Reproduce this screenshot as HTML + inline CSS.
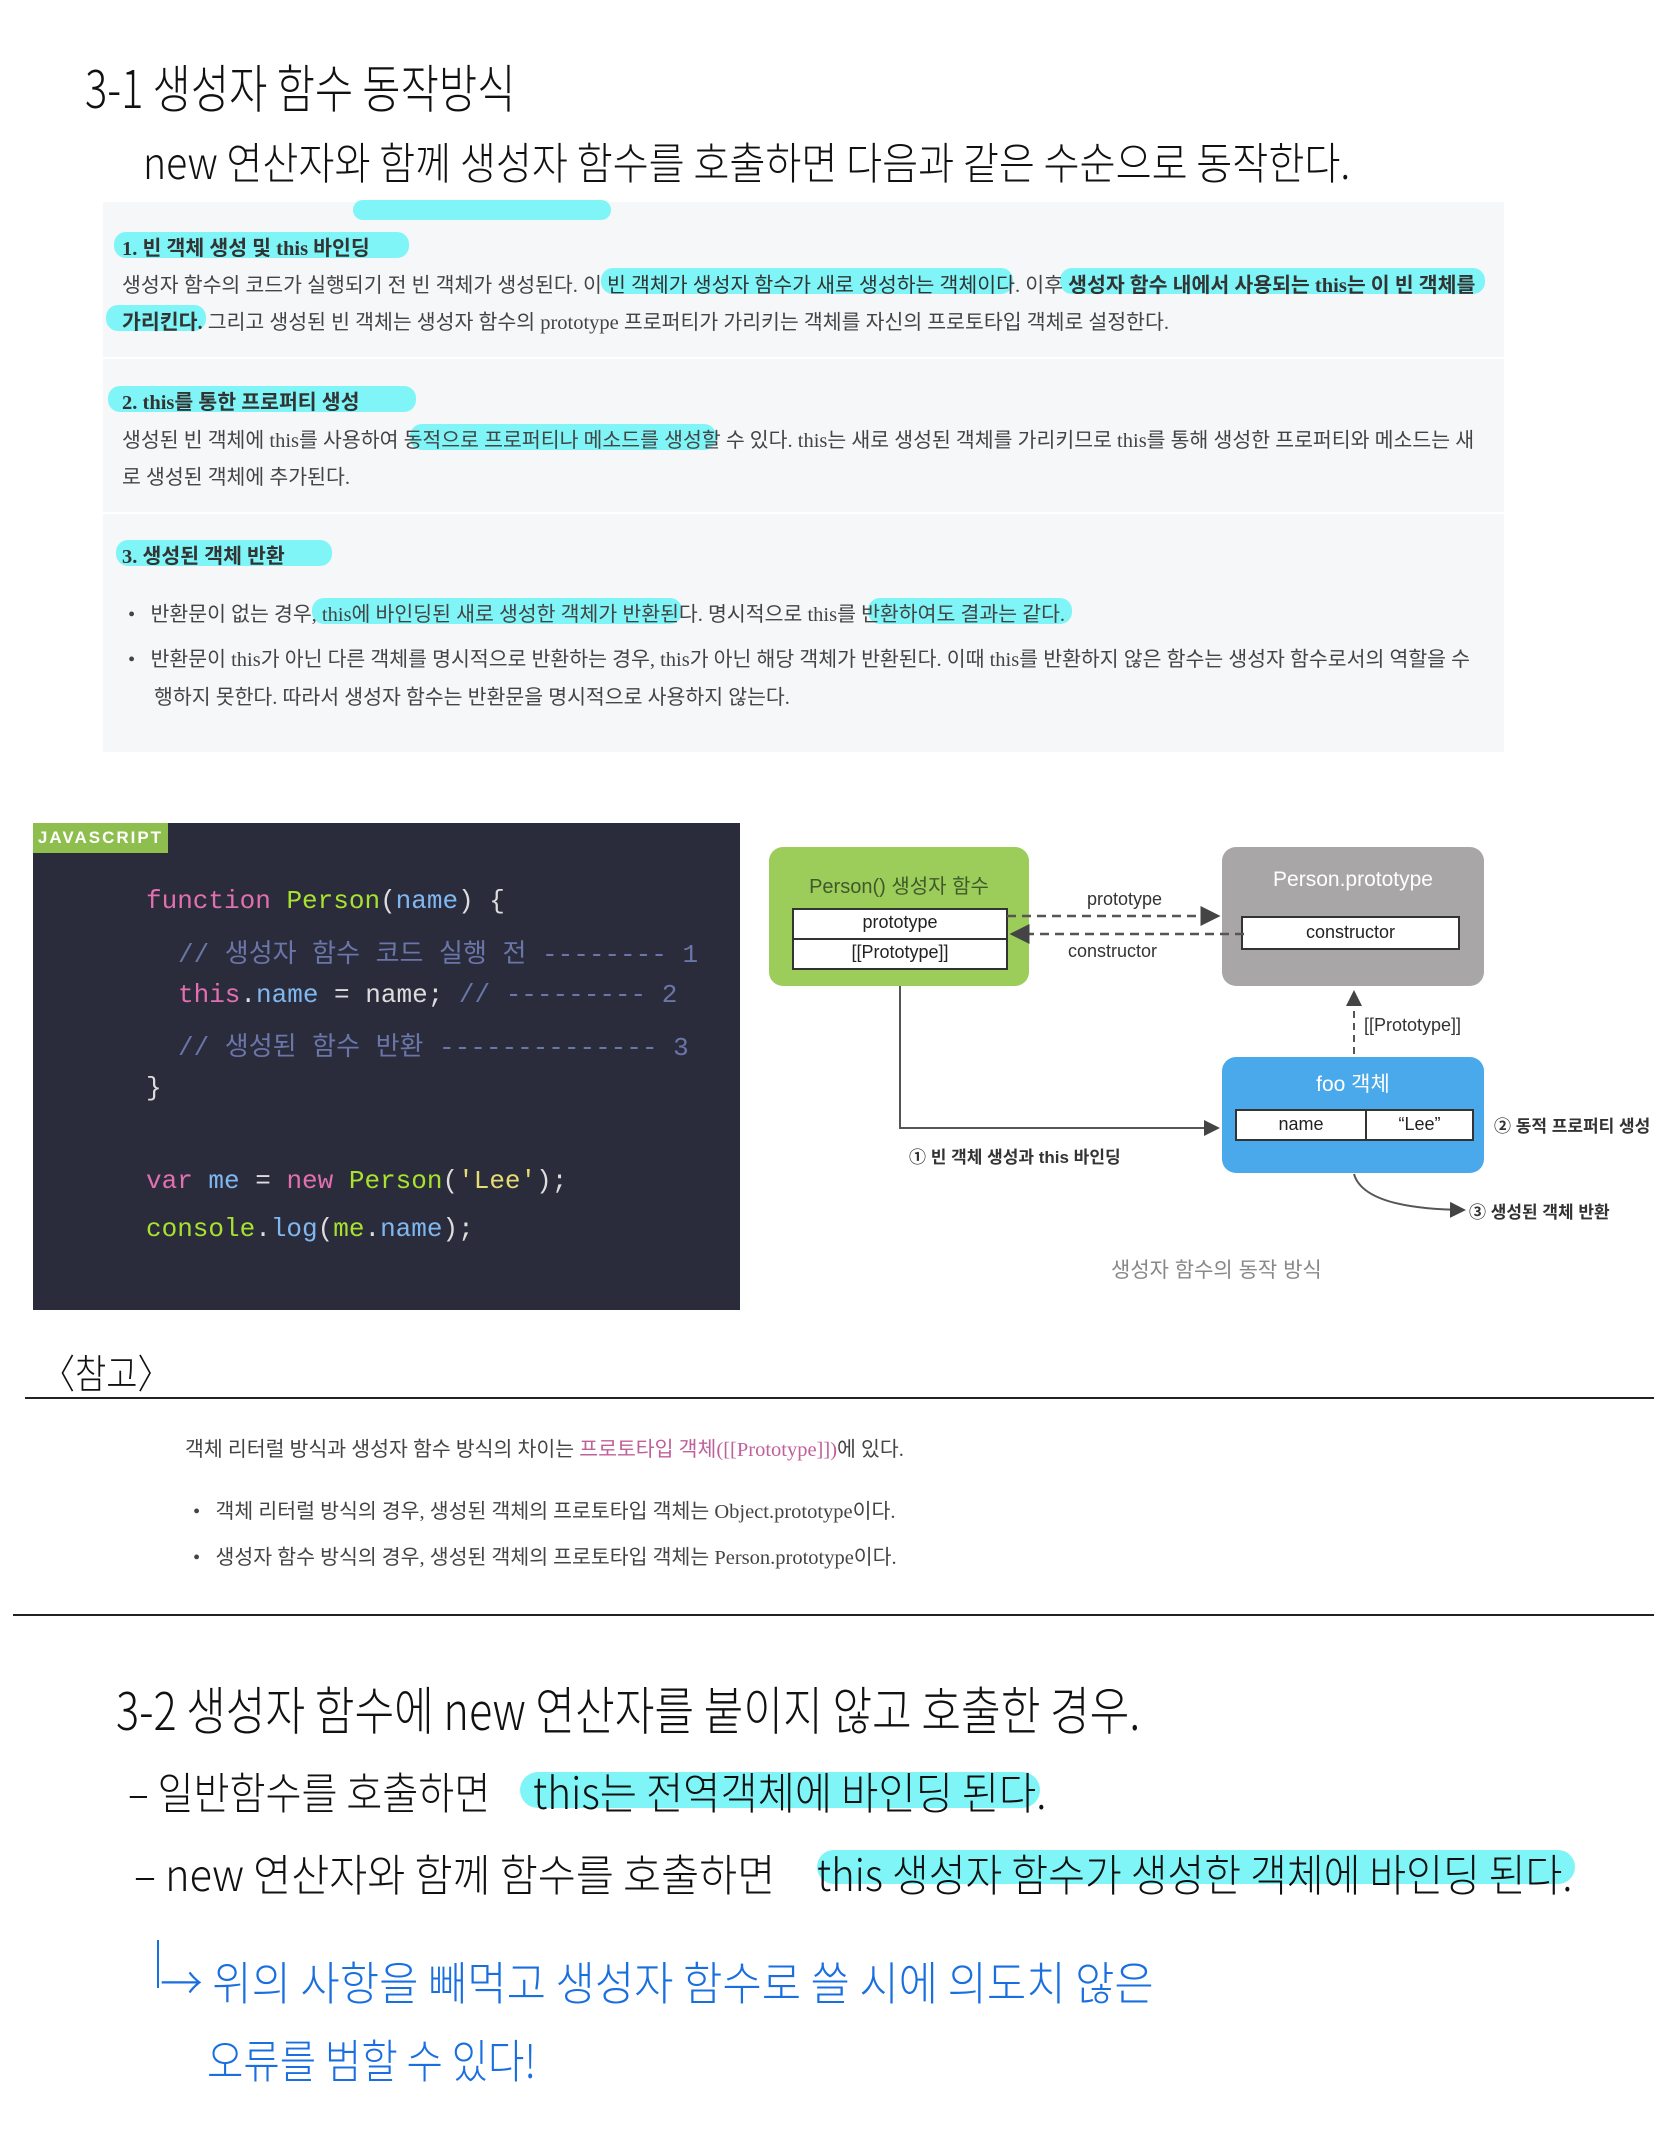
<!DOCTYPE html>
<html><head><meta charset="utf-8"><style>
body{margin:0;width:1668px;height:2154px;background:#fff;position:relative;overflow:hidden;font-family:"Liberation Sans","Noto Sans CJK KR",sans-serif}
.a{position:absolute;white-space:nowrap}
.hw{font-family:"Noto Sans CJK KR",sans-serif;font-weight:300;color:#111;transform-origin:left top}
.hl{position:absolute;background:#7ff5f7;border-radius:12px}
.tx{font-family:"Liberation Serif","Noto Sans CJK KR",serif;color:#444;font-size:20.5px}
.b{font-weight:bold;color:#333}
.code{font-family:"Liberation Mono",monospace;font-size:26px;color:#ddd}
.dg{font-family:"Liberation Sans","Noto Sans CJK KR",sans-serif}
</style></head><body>
<div class="a hw" style="left:85px;top:48px;font-size:52px;transform:scaleX(.8)">3-1 생성자 함수 동작방식</div>
<div class="a hw" style="left:143px;top:128px;font-size:44px;transform:scaleX(.89)">new 연산자와 함께 생성자 함수를 호출하면 다음과 같은 수순으로 동작한다.</div>
<div class="hl" style="left:353px;top:200px;width:258px;height:20px"></div>

<div class="a" style="left:103px;top:202px;width:1401px;height:550px;background:#f6f7f9"></div>
<div class="a" style="left:103px;top:357px;width:1401px;height:2px;background:#fff"></div>
<div class="a" style="left:103px;top:512px;width:1401px;height:2px;background:#fff"></div>
<div class="hl" style="left:353px;top:200px;width:258px;height:20px"></div>

<div class="hl" style="left:114px;top:232px;width:295px;height:26px"></div>
<div class="a tx b" style="left:122px;top:231px">1. 빈 객체 생성 및 this 바인딩</div>
<div class="hl" style="left:601px;top:268px;width:412px;height:26px"></div>
<div class="hl" style="left:1060px;top:268px;width:425px;height:26px"></div>
<div class="hl" style="left:106px;top:305px;width:100px;height:26px"></div>
<div class="a tx" style="left:122px;top:268px">생성자 함수의 코드가 실행되기 전 빈 객체가 생성된다. 이 <span style="color:#333">빈 객체가 생성자 함수가 새로 생성하는 객체이다</span>. 이후 <b class="b">생성자 함수 내에서 사용되는 this는 이 빈 객체를</b></div>
<div class="a tx" style="left:122px;top:305px"><b class="b">가리킨다.</b> 그리고 생성된 빈 객체는 생성자 함수의 prototype 프로퍼티가 가리키는 객체를 자신의 프로토타입 객체로 설정한다.</div>

<div class="hl" style="left:108px;top:386px;width:308px;height:26px"></div>
<div class="a tx b" style="left:122px;top:385px">2. this를 통한 프로퍼티 생성</div>
<div class="hl" style="left:410px;top:424px;width:306px;height:26px"></div>
<div class="a tx" style="left:122px;top:423px">생성된 빈 객체에 this를 사용하여 동적으로 프로퍼티나 메소드를 생성할 수 있다. this는 새로 생성된 객체를 가리키므로 this를 통해 생성한 프로퍼티와 메소드는 새</div>
<div class="a tx" style="left:122px;top:460px">로 생성된 객체에 추가된다.</div>

<div class="hl" style="left:116px;top:540px;width:216px;height:26px"></div>
<div class="a tx b" style="left:122px;top:539px">3. 생성된 객체 반환</div>
<div class="hl" style="left:312px;top:598px;width:370px;height:26px"></div>
<div class="hl" style="left:868px;top:598px;width:204px;height:26px"></div>
<div class="a tx" style="left:128px;top:597px">•&nbsp;&nbsp; 반환문이 없는 경우, this에 바인딩된 새로 생성한 객체가 반환된다. 명시적으로 this를 반환하여도 결과는 같다.</div>
<div class="a tx" style="left:128px;top:642px">•&nbsp;&nbsp; 반환문이 this가 아닌 다른 객체를 명시적으로 반환하는 경우, this가 아닌 해당 객체가 반환된다. 이때 this를 반환하지 않은 함수는 생성자 함수로서의 역할을 수</div>
<div class="a tx" style="left:154px;top:680px">행하지 못한다. 따라서 생성자 함수는 반환문을 명시적으로 사용하지 않는다.</div>

<div class="a" style="left:33px;top:823px;width:707px;height:487px;background:#2b2c3b"></div>
<div class="a" style="left:33px;top:823px;width:135px;height:30px;background:#8ebf4e;color:#fff;font:bold 17px 'Liberation Sans';letter-spacing:2px;line-height:30px;text-align:center">JAVASCRIPT</div>
<div class="a code" style="left:146px;top:886px"><span style="color:#e26fb0">function</span> <span style="color:#a6e22e">Person</span>(<span style="color:#7fb8f0">name</span>) {</div>
<div class="a code" style="left:178px;top:933px;color:#6a75a8">// 생성자 함수 코드 실행 전 -------- 1</div>
<div class="a code" style="left:178px;top:980px"><span style="color:#e26fb0">this</span>.<span style="color:#7fb8f0">name</span> = name;  <span style="color:#6a75a8">// --------- 2</span></div>
<div class="a code" style="left:178px;top:1026px;color:#6a75a8">// 생성된 함수 반환 -------------- 3</div>
<div class="a code" style="left:146px;top:1073px">}</div>
<div class="a code" style="left:146px;top:1166px"><span style="color:#e26fb0">var</span> <span style="color:#7fb8f0">me</span> = <span style="color:#e26fb0">new</span> <span style="color:#a6e22e">Person</span>(<span style="color:#e6db74">'Lee'</span>);</div>
<div class="a code" style="left:146px;top:1214px"><span style="color:#a6e22e">console</span>.<span style="color:#7fb8f0">log</span>(<span style="color:#a6e22e">me</span>.<span style="color:#7fb8f0">name</span>);</div>

<svg class="a" style="left:4px;top:4px" width="1668" height="1320">
<defs><marker id="ar" markerWidth="8" markerHeight="8" refX="7" refY="4" orient="auto"><path d="M0,0L8,4L0,8z" fill="#444"/></marker></defs>
<rect x="765" y="843" width="260" height="139" rx="14" fill="#9ccc5a"/>
<rect x="789" y="905" width="214" height="60" fill="#fff" stroke="#333" stroke-width="2"/>
<line x1="789" y1="935" x2="1003" y2="935" stroke="#333" stroke-width="2"/>
<rect x="1218" y="843" width="262" height="139" rx="14" fill="#a9a6a7"/>
<rect x="1238" y="913" width="217" height="32" fill="#fff" stroke="#333" stroke-width="2"/>
<rect x="1218" y="1053" width="262" height="116" rx="14" fill="#4aa9ea"/>
<rect x="1232" y="1106" width="237" height="30" fill="#fff" stroke="#333" stroke-width="2"/>
<line x1="1362" y1="1106" x2="1362" y2="1136" stroke="#333" stroke-width="2"/>
<line x1="1003" y1="912" x2="1214" y2="912" stroke="#555" stroke-width="2.5" stroke-dasharray="9,6" marker-end="url(#ar)"/>
<line x1="1240" y1="930" x2="1008" y2="930" stroke="#555" stroke-width="2.5" stroke-dasharray="9,6" marker-end="url(#ar)"/>
<line x1="1350" y1="1050" x2="1350" y2="988" stroke="#555" stroke-width="2" stroke-dasharray="7,5" marker-end="url(#ar)"/>
<polyline points="896,982 896,1124 1214,1124" fill="none" stroke="#555" stroke-width="2" marker-end="url(#ar)"/>
<path d="M1350,1170 Q1360,1205 1460,1206" fill="none" stroke="#555" stroke-width="2" marker-end="url(#ar)"/>
</svg>
<div style="position:absolute;left:4px;top:4px">
<div class="a dg" style="left:765px;top:866px;width:260px;text-align:center;font-size:20px;color:#3f5a2a">Person() 생성자 함수</div>
<div class="a dg" style="left:789px;top:908px;width:214px;text-align:center;font-size:18px;color:#222">prototype</div>
<div class="a dg" style="left:789px;top:938px;width:214px;text-align:center;font-size:18px;color:#222">[[Prototype]]</div>
<div class="a dg" style="left:1218px;top:864px;width:262px;text-align:center;font-size:21px;color:#fff">Person.prototype</div>
<div class="a dg" style="left:1238px;top:918px;width:217px;text-align:center;font-size:18px;color:#222">constructor</div>
<div class="a dg" style="left:1218px;top:1064px;width:262px;text-align:center;font-size:21px;color:#fff">foo 객체</div>
<div class="a dg" style="left:1232px;top:1110px;width:130px;text-align:center;font-size:18px;color:#222">name</div>
<div class="a dg" style="left:1362px;top:1110px;width:107px;text-align:center;font-size:18px;color:#222">“Lee”</div>
<div class="a dg" style="left:1083px;top:885px;font-size:18px;color:#333">prototype</div>
<div class="a dg" style="left:1064px;top:937px;font-size:18px;color:#333">constructor</div>
<div class="a dg" style="left:1360px;top:1011px;font-size:18px;color:#333">[[Prototype]]</div>
<div class="a dg" style="left:905px;top:1139px;font-size:17px;color:#333;font-weight:bold">① 빈 객체 생성과 this 바인딩</div>
<div class="a dg" style="left:1490px;top:1108px;font-size:17px;color:#333;font-weight:bold">② 동적 프로퍼티 생성</div>
<div class="a dg" style="left:1465px;top:1194px;font-size:17px;color:#333;font-weight:bold">③ 생성된 객체 반환</div>
<div class="a dg" style="left:1107px;top:1250px;font-size:21px;color:#888">생성자 함수의 동작 방식</div>
</div>

<div class="a hw" style="left:41px;top:1342px;font-size:40px;transform:scaleX(.85)">〈참고〉</div>
<div class="a" style="left:25px;top:1397px;width:1629px;height:2px;background:#222"></div>
<div class="a tx" style="left:185px;top:1432px">객체 리터럴 방식과 생성자 함수 방식의 차이는 <span style="color:#c0609a">프로토타입 객체([[Prototype]])</span>에 있다.</div>
<div class="a tx" style="left:193px;top:1494px">•&nbsp;&nbsp; 객체 리터럴 방식의 경우, 생성된 객체의 프로토타입 객체는 Object.prototype이다.</div>
<div class="a tx" style="left:193px;top:1540px">•&nbsp;&nbsp; 생성자 함수 방식의 경우, 생성된 객체의 프로토타입 객체는 Person.prototype이다.</div>
<div class="a" style="left:13px;top:1614px;width:1641px;height:2px;background:#222"></div>

<div class="a hw" style="left:116px;top:1670px;font-size:52px;transform:scaleX(.83)">3-2 생성자 함수에 new 연산자를 붙이지 않고 호출한 경우.</div>
<div class="hl" style="left:520px;top:1772px;width:520px;height:36px;border-radius:18px"></div>
<div class="a hw" style="left:128px;top:1758px;font-size:44px;transform:scaleX(.89)">– 일반함수를 호출하면</div>
<div class="a hw" style="left:533px;top:1758px;font-size:44px;transform:scaleX(.92)">this는 전역객체에 바인딩 된다.</div>
<div class="hl" style="left:817px;top:1850px;width:758px;height:34px;border-radius:18px"></div>
<div class="a hw" style="left:134px;top:1840px;font-size:44px;transform:scaleX(.94)">– new 연산자와 함께 함수를 호출하면</div>
<div class="a hw" style="left:817px;top:1840px;font-size:44px;transform:scaleX(.91)">this 생성자 함수가 생성한 객체에 바인딩 된다.</div>
<div class="a" style="left:157px;top:1940px;width:2px;height:48px;background:#1a6fe0"></div>
<div class="a hw" style="left:160px;top:1948px;font-size:46px;color:#1a6fe0;transform:scaleX(.93)">→ 위의 사항을 빼먹고 생성자 함수로 쓸 시에 의도치 않은</div>
<div class="a hw" style="left:207px;top:2026px;font-size:46px;color:#1a6fe0;transform:scaleX(.86)">오류를 범할 수 있다!</div>
</body></html>
